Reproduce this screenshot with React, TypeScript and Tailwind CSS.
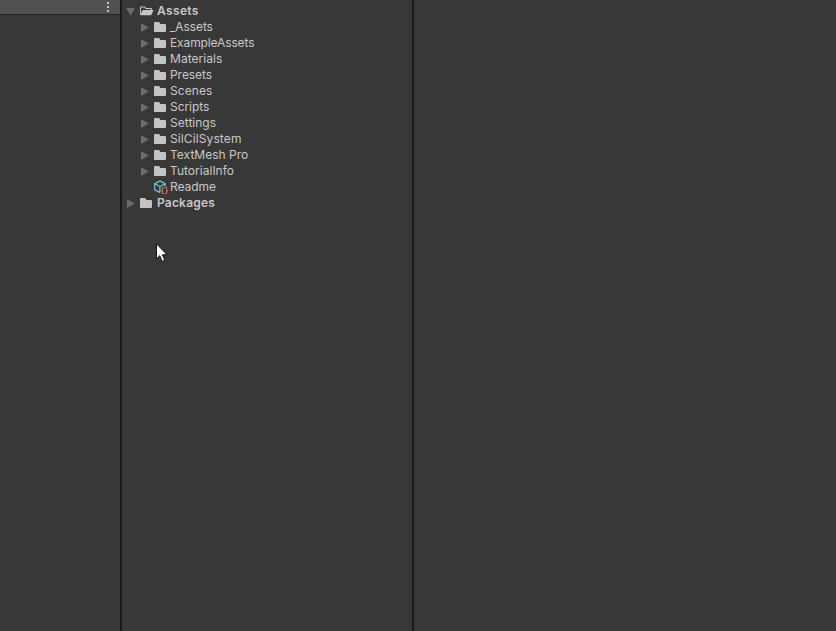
const folders = [
  { name: '_Assets', tracking: '-tracking-[0.1px]' },
  { name: 'ExampleAssets', tracking: '-tracking-[0.12px]' },
  { name: 'Materials', tracking: 'tracking-[0.04px]' },
  { name: 'Presets', tracking: '-tracking-[0.05px]' },
  { name: 'Scenes', tracking: 'tracking-[0.06px]' },
  { name: 'Scripts', tracking: '-tracking-[0.06px]' },
  { name: 'Settings', tracking: 'tracking-[0.02px]' },
  { name: 'SilCilSystem', tracking: 'tracking-[0.11px]' },
  { name: 'TextMesh Pro', tracking: 'tracking-[0.02px]' },
  { name: 'TutorialInfo', tracking: 'tracking-[0.02px]' },
];

function Arrow({ open = false }: { open?: boolean }) {
  return (
    <svg className="h-4 w-[10px] shrink-0" viewBox="0 0 10 16" fill="#6b6b6b">
      {open ? <path d="M.3 5h8.6L4.6 12.7z" /> : <path d="M1 4l8 4.5L1 13z" />}
    </svg>
  );
}

function Folder() {
  return (
    <svg className="h-4 w-3 shrink-0" viewBox="0 0 12 16" fill="#c4c4c4">
      <path d="M0 4q0-1 1-1h4l1.5 2H11q1 0 1 1v6q0 1-1 1H1q-1 0-1-1z" />
    </svg>
  );
}

function OpenFolder() {
  return (
    <svg className="h-4 w-[14px] shrink-0" viewBox="0 0 14 16" fill="#c4c4c4">
      <path d="M0 4.5q0-1 1-1h3.8l1.4 1.4H11q1 0 1 1V7h-1V6H5.7L4.3 4.6H1v6L2.7 7h10.8l-1.9 4.5q-.3.8-1.1.8H1q-1 0-1-1z" />
    </svg>
  );
}

function AssetIcon() {
  return (
    <svg className="h-4 w-[14px] shrink-0" viewBox="0 0 14 16" fill="none">
      <path d="M6 13.6L.7 10.8V4.7L5.9 1.9 11 4.7v3M.7 4.7L5.9 7.4 11 4.7M5.9 7.4v6.2" stroke="#72c8ee" strokeWidth="1.1" />
      <path d="M10 8.5H8.5v2.3l-1 .9 1 .9v1.9H10M11 8.5h1.5v2.3l1 .9-1 .9v1.9H11" stroke="#f0623f" strokeWidth="1.1" />
    </svg>
  );
}

export default function App() {
  return (
    <main className="flex h-[631px] w-[836px] overflow-hidden bg-[#383838] font-['Inter',sans-serif] text-[12px] leading-4 text-[#c8c8c8]">
      <aside className="w-[120px] shrink-0">
        <header className="flex h-[15px] justify-end border-b border-[#232323] bg-[#515151] pr-[11px]">
          <div className="flex w-[2px] flex-col gap-[2px] pt-[2px]">
            <i className="size-[2px] bg-[#c4c4c4]" />
            <i className="size-[2px] bg-[#c4c4c4]" />
            <i className="size-[2px] bg-[#c4c4c4]" />
          </div>
        </header>
      </aside>
      <section className="w-[294px] shrink-0 border-x-2 border-[#1a1a1a] pt-[3px]">
        <div className="flex h-4 pl-1">
          <Arrow open />
          <span className="ml-1 flex w-[17px]"><OpenFolder /></span>
          <b className="font-semibold tracking-[0.35px]">Assets</b>
        </div>
        {folders.map(({ name, tracking }) => (
          <div key={name} className="flex h-4 pl-[18px]">
            <Arrow />
            <span className="ml-1 flex w-4"><Folder /></span>
            <span className={tracking}>{name}</span>
          </div>
        ))}
        <div className="flex h-4 pl-8">
          <span className="flex w-4"><AssetIcon /></span>
          <span className="-tracking-[0.05px]">Readme</span>
        </div>
        <div className="flex h-4 pl-1">
          <Arrow />
          <span className="ml-1 flex w-[17px]"><Folder /></span>
          <b className="font-semibold tracking-[0.2px]">Packages</b>
        </div>
      </section>
      <section className="flex-1" />
      <svg className="absolute left-[156px] top-[243px] h-5 w-3" viewBox="0 0 12 20">
        <path d="M.5.8v15l3.3-3.1 2.4 5.7 2.6-1.1-2.4-5.5h4.7z" fill="#fff" stroke="#111125" strokeWidth="1" />
      </svg>
    </main>
  );
}
